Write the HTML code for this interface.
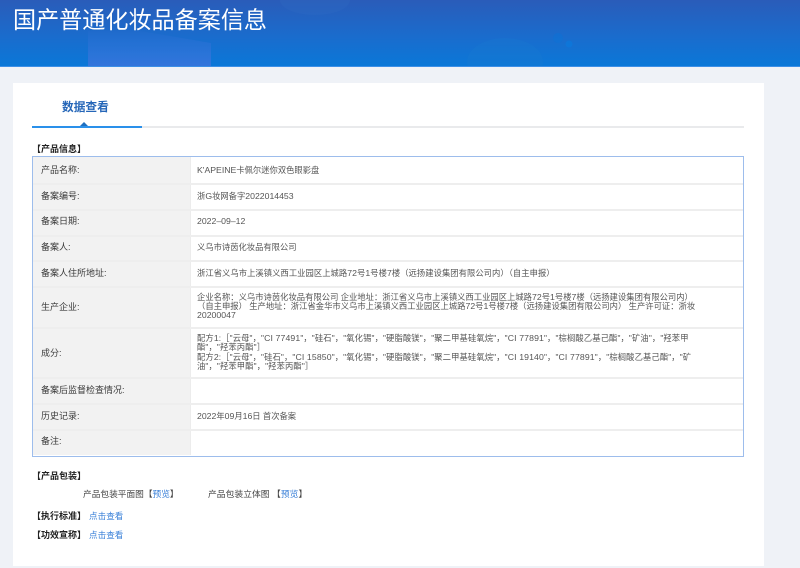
<!DOCTYPE html>
<html lang="zh"><head><meta charset="utf-8">
<style>
html,body{margin:0;padding:0;width:800px;height:568px;overflow:hidden;background:#eff2f7;}
body{position:relative;font-family:"Liberation Sans","Noto Sans CJK SC",sans-serif;}
.a{position:absolute;white-space:nowrap;}
.t{font-size:8.3px;line-height:11px;color:#555;filter:blur(.25px);}
.t i{font-style:normal;font-size:8.7px;}
.l{font-size:9px;line-height:11px;color:#3a3a3a;left:41px;filter:blur(.25px);}
.b{font-size:9px;line-height:11px;color:#222;filter:blur(.2px);}
.h{position:absolute;left:33px;width:710px;height:2px;background:#eeeeee;}
a{color:#3a80d8;text-decoration:none;}
</style></head><body>
<div class="a" style="left:0;top:0;width:800px;height:67px;overflow:hidden;background:linear-gradient(180deg,#2a5cb9 0%,#1a6ccd 55%,#0a78d8 100%);">
<svg width="800" height="67" style="position:absolute;left:0;top:0">
<defs><linearGradient id="g" x1="0" y1="0" x2="0" y2="1"><stop offset="0" stop-color="#3f74dc" stop-opacity=".05"/><stop offset="1" stop-color="#3f74dc" stop-opacity=".8"/></linearGradient></defs>
<path d="M88 67V31L135 30L211 43V67Z" fill="url(#g)"/>
<ellipse cx="315" cy="0" rx="35" ry="15" fill="#3a76c8" opacity=".18"/>
<ellipse cx="505" cy="62" rx="38" ry="24" fill="#1a7cd0" opacity=".3"/>
<circle cx="558" cy="38" r="5" fill="#0a74d8" opacity=".45"/>
<circle cx="569" cy="44" r="3.5" fill="#0a7ce0" opacity=".55"/>
</svg>
<div class="a" style="left:13px;top:5px;font-size:23.1px;line-height:30px;color:#fff;">国产普通化妆品备案信息</div>
<div class="a" style="left:0;top:66px;width:800px;height:1px;background:#3d8fe6;"></div>
</div>

<div class="a" style="left:13px;top:83px;width:751px;height:483px;background:#fff;"></div>

<div class="a" style="left:62px;top:100px;font-size:11.7px;line-height:16px;font-weight:bold;color:#2566b8;filter:blur(.2px);">数据查看</div>
<div class="a" style="left:32px;top:126px;width:712px;height:1.5px;background:#e9eaec;"></div>
<div class="a" style="left:32px;top:126px;width:110px;height:1.5px;background:#2a90ea;"></div>
<div class="a" style="left:80px;top:122px;width:0;height:0;border-left:4px solid transparent;border-right:4px solid transparent;border-bottom:4px solid #1f6fc0;"></div>

<div class="a b" style="left:32px;top:144px;font-weight:bold;">【产品信息】</div>

<div class="a" style="left:32px;top:156px;width:710px;height:299px;border:1px solid #9dbdec;"></div>
<div class="a" style="left:33px;top:157px;width:157px;height:298px;background:#f2f2f2;"></div>
<div class="a" style="left:190px;top:157px;width:1px;height:298px;background:#ececec;"></div>
<div class="h" style="top:183px"></div><div class="h" style="top:209px"></div><div class="h" style="top:235px"></div><div class="h" style="top:260px"></div><div class="h" style="top:286px"></div><div class="h" style="top:327px"></div><div class="h" style="top:377px"></div><div class="h" style="top:403px"></div><div class="h" style="top:429px"></div>

<div class="a l" style="top:165px">产品名称:</div>
<div class="a l" style="top:191px">备案编号:</div>
<div class="a l" style="top:216px">备案日期:</div>
<div class="a l" style="top:242px">备案人:</div>
<div class="a l" style="top:268px">备案人住所地址:</div>
<div class="a l" style="top:302px">生产企业:</div>
<div class="a l" style="top:348px">成分:</div>
<div class="a l" style="top:385px">备案后监督检查情况:</div>
<div class="a l" style="top:411px">历史记录:</div>
<div class="a l" style="top:436px">备注:</div>

<div class="a t" style="left:197px;top:165px"><i>K'APEINE</i>卡佩尔迷你双色眼影盘</div>
<div class="a t" style="left:197px;top:191px">浙<i>G</i>妆网备字<i>2022014453</i></div>
<div class="a t" style="left:197px;top:216px"><i>2022–09–12</i></div>
<div class="a t" style="left:197px;top:242px">义乌市诗茵化妆品有限公司</div>
<div class="a t" style="left:197px;top:268px;letter-spacing:.05px">浙江省义乌市上溪镇义西工业园区上城路<i>72</i>号<i>1</i>号楼<i>7</i>楼&#xFF08;远扬建设集团有限公司内&#xFF09;&#xFF08;自主申报&#xFF09;</div>
<div class="a t" style="left:197px;top:293px;line-height:9.2px;letter-spacing:.02px">企业名称&#xFF1A;义乌市诗茵化妆品有限公司 企业地址&#xFF1A;浙江省义乌市上溪镇义西工业园区上城路<i>72</i>号<i>1</i>号楼<i>7</i>楼&#xFF08;远扬建设集团有限公司内&#xFF09;<br>&#xFF08;自主申报&#xFF09; 生产地址&#xFF1A;浙江省金华市义乌市上溪镇义西工业园区上城路<i>72</i>号<i>1</i>号楼<i>7</i>楼&#xFF08;远扬建设集团有限公司内&#xFF09; 生产许可证&#xFF1A;浙妆<br><i>20200047</i></div>
<div class="a t" style="left:197px;top:334px;line-height:9.4px;letter-spacing:.12px">配方<i>1</i>:&#xFF3B;"云母"&#xFF0C;"<i>CI 77491</i>"&#xFF0C;"硅石"&#xFF0C;"氧化锡"&#xFF0C;"硬脂酸镁"&#xFF0C;"聚二甲基硅氧烷"&#xFF0C;"<i>CI 77891</i>"&#xFF0C;"棕榈酸乙基己酯"&#xFF0C;"矿油"&#xFF0C;"羟苯甲<br>酯"&#xFF0C;"羟苯丙酯"&#xFF3D;<br>配方<i>2</i>:&#xFF3B;"云母"&#xFF0C;"硅石"&#xFF0C;"<i>CI 15850</i>"&#xFF0C;"氧化锡"&#xFF0C;"硬脂酸镁"&#xFF0C;"聚二甲基硅氧烷"&#xFF0C;"<i>CI 19140</i>"&#xFF0C;"<i>CI 77891</i>"&#xFF0C;"棕榈酸乙基己酯"&#xFF0C;"矿<br>油"&#xFF0C;"羟苯甲酯"&#xFF0C;"羟苯丙酯"&#xFF3D;</div>
<div class="a t" style="left:197px;top:411px"><i>2022</i>年<i>09</i>月<i>16</i>日 首次备案</div>

<div class="a b" style="left:32px;top:471px;font-weight:bold;">【产品包装】</div>
<div class="a t" style="left:83px;top:489px;color:#444;font-size:8.7px">产品包装平面图【<a>预览</a>】</div>
<div class="a t" style="left:208px;top:489px;color:#444;font-size:8.8px">产品包装立体图 【<a>预览</a>】</div>
<div class="a b" style="left:32px;top:511px;font-weight:bold;">【执行标准】</div>
<div class="a t" style="left:89px;top:511px;font-size:8.6px"><a>点击查看</a></div>
<div class="a b" style="left:32px;top:530px;font-weight:bold;">【功效宣称】</div>
<div class="a t" style="left:89px;top:530px;font-size:8.6px"><a>点击查看</a></div>
</body></html>
